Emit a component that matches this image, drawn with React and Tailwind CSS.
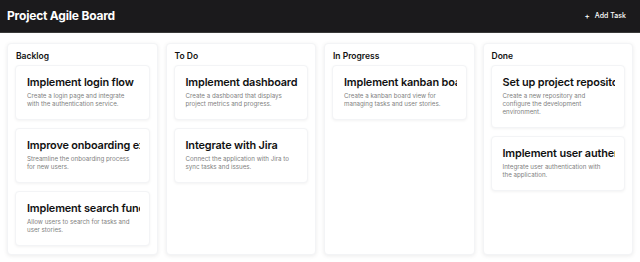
import React from 'react';

const columns = [
  {
    title: 'Backlog',
    tasks: [
      { title: 'Implement login flow', desc: 'Create a login page and integrate with the authentication service.' },
      { title: 'Improve onboarding experience', desc: 'Streamline the onboarding process for new users.' },
      { title: 'Implement search functionality', desc: 'Allow users to search for tasks and user stories.' },
    ],
  },
  {
    title: 'To Do',
    tasks: [
      { title: 'Implement dashboard', desc: 'Create a dashboard that displays project metrics and progress.' },
      { title: 'Integrate with Jira', desc: 'Connect the application with Jira to sync tasks and issues.' },
    ],
  },
  {
    title: 'In Progress',
    tasks: [
      { title: 'Implement kanban board', desc: 'Create a kanban board view for managing tasks and user stories.' },
    ],
  },
  {
    title: 'Done',
    tasks: [
      { title: 'Set up project repository', desc: 'Create a new repository and configure the development environment.' },
      { title: 'Implement user authentication', desc: 'Integrate user authentication with the application.' },
    ],
  },
];

const TaskCard = ({ task }) => (
  <div className="bg-white rounded-[4px] border border-gray-100 shadow-[0_1px_3px_rgba(0,0,0,0.05)] pl-[10px] pr-[9px] pt-[8px] pb-[11px]">
    <div className="pl-[1px] text-[10.9px] leading-[17px] font-semibold text-[#111] whitespace-nowrap overflow-hidden tracking-[-0.15px]">{task.title}</div>
    <div className="pl-[1px] pr-[4px] mt-[1px] text-[6.2px] leading-[8px] text-[#808080]">{task.desc}</div>
  </div>
);

const App = () => {
  return (
    <div className="w-[640px] h-[262px] bg-white overflow-hidden" style={{ fontFamily: 'Inter, "Noto Sans", sans-serif' }}>
      <div className="h-[33px] bg-[#1b1a1c] flex items-center justify-between px-[7px] border-b border-[#3a3a3a]">
        <h1 className="text-[12px] font-bold text-white tracking-[-0.2px]">Project Agile Board</h1>
        <button className="flex items-center gap-[5px] text-[7px] font-medium text-white mr-[7px]">
          <span className="text-[8px] leading-none">+</span>
          <span>Add Task</span>
        </button>
      </div>
      <div className="grid grid-cols-4 gap-2 px-[7px] pt-[10px]">
        {columns.map(col => (
          <div key={col.title} className="h-[212px] bg-white rounded-[4px] border border-gray-100 shadow-[0_1px_4px_rgba(0,0,0,0.08)] px-[7px] pt-[6px]">
            <div className="text-[8.5px] leading-[12px] font-semibold text-[#111] mb-[3px] px-[1px]">{col.title}</div>
            <div className="flex flex-col gap-[8px]">
              {col.tasks.map(t => <TaskCard key={t.title} task={t} />)}
            </div>
          </div>
        ))}
      </div>
    </div>
  );
};

export default App;
